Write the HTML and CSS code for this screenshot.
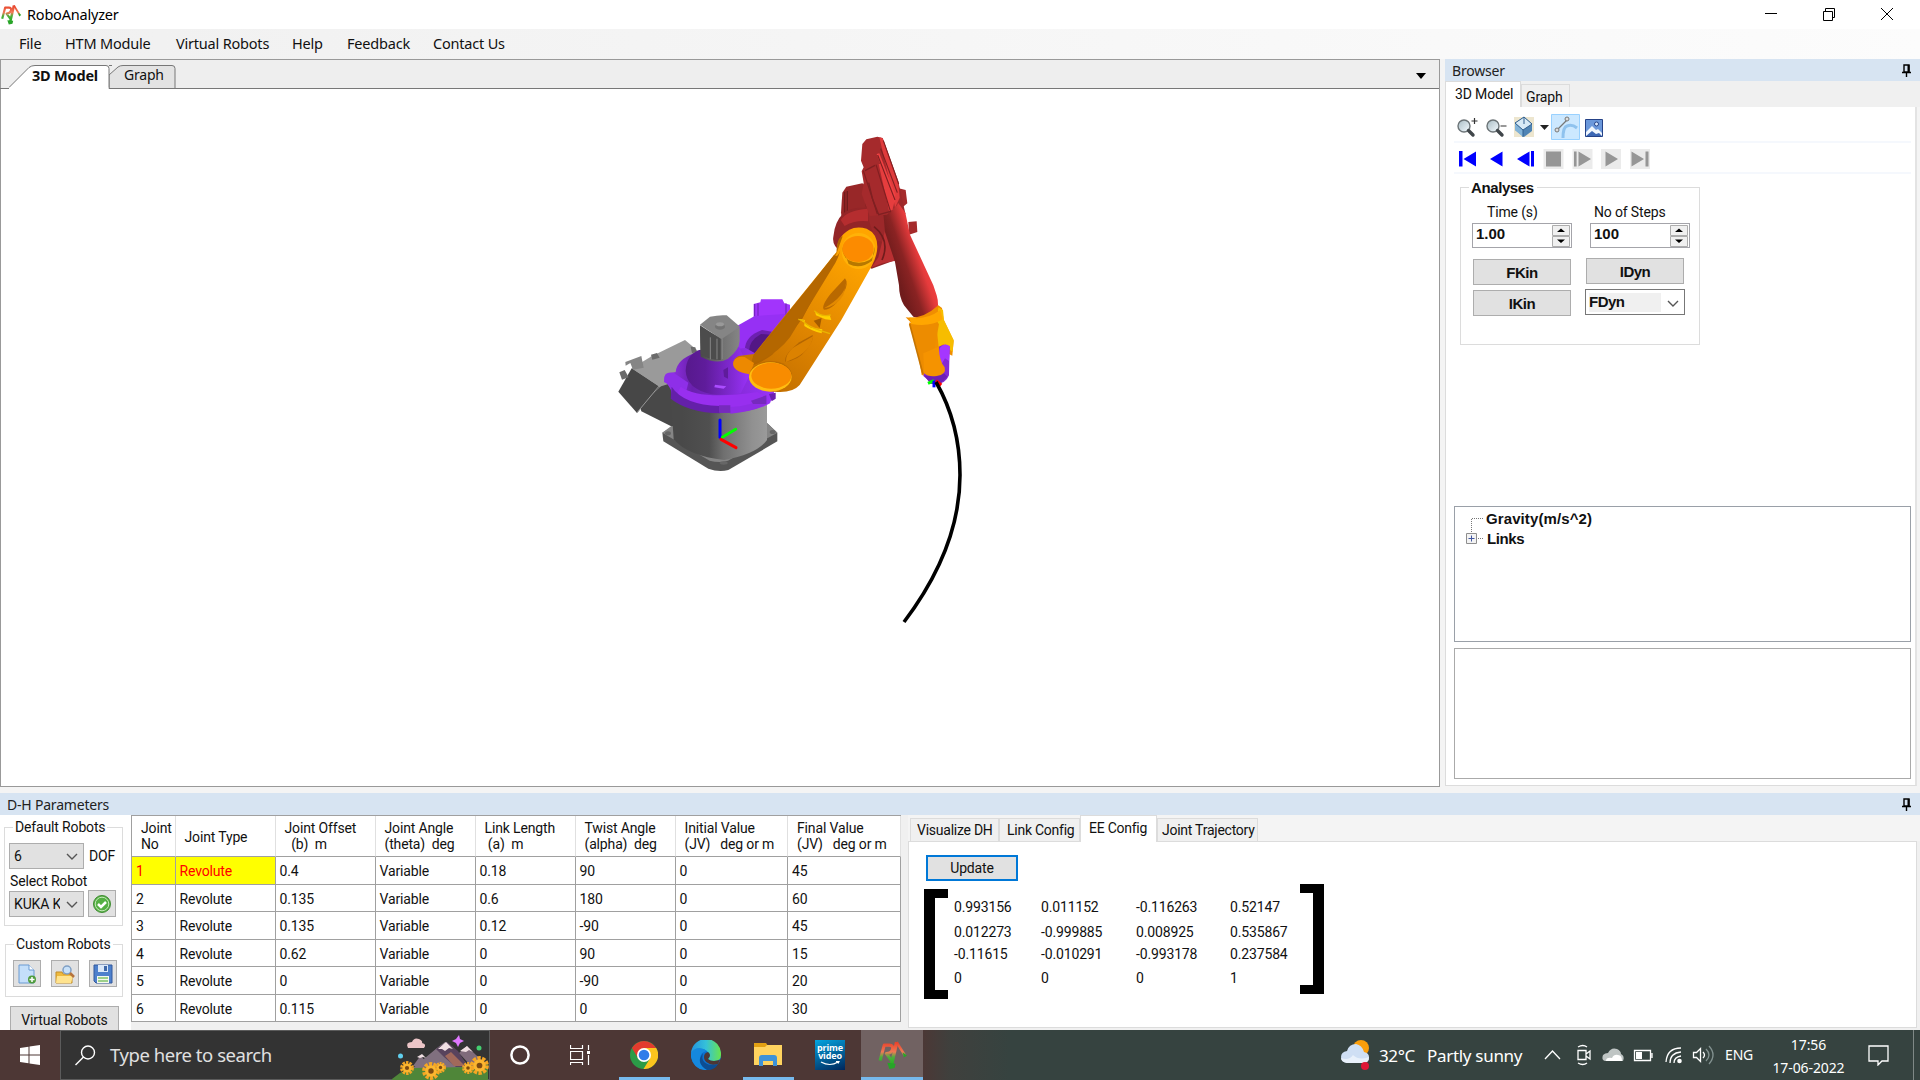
FILE: index.html
```html
<!DOCTYPE html>
<html lang="en">
<head>
<meta charset="utf-8">
<title>RoboAnalyzer</title>
<link rel="stylesheet" href="styles.css">
</head>
<body>
<svg class="defs" width="0" height="0" aria-hidden="true">
  <defs>
    <linearGradient id="ra" gradientUnits="userSpaceOnUse" x1="0" y1="2" x2="0" y2="26"><stop offset="0" stop-color="#e8402a"/><stop offset=".4" stop-color="#ef7a55"/><stop offset=".6" stop-color="#4fae3c"/><stop offset="1" stop-color="#16b516"/></linearGradient>
    <symbol id="logo" viewBox="0 0 30 30">
      <g fill="none" stroke="url(#ra)" stroke-linejoin="round">
        <path d="M3 20 7 5h5q4 0 3 4t-6 4l5 7" stroke-width="3"/>
        <path d="M19 2 14 24" stroke-width="3.4"/><path d="M19 2l8 13" stroke-width="2.4"/>
      </g>
      <path d="M25 12l4 3-3 2zM10 22l8 1-1 4-5 1z" fill="#28a428"/>
    </symbol>
    <symbol id="pin" viewBox="0 0 9 13"><path d="M2 1h5v7H2zM0 8.500h9M4.500 9v4" fill="none" stroke="#000" stroke-width="1.400"/><path d="M5.500 1h2v7h-2z"/></symbol>
    <symbol id="chev" viewBox="0 0 12 7"><path d="M1 1l5 5 5-5" fill="none" stroke="#555" stroke-width="1.400"/></symbol>
    <symbol id="flower" viewBox="-10 -10 20 20"><circle r="7.600" fill="none" stroke="#f5a623" stroke-width="4.600" stroke-dasharray="3.400 1.375"/><circle r="6.500" fill="#fbb62f"/><circle r="3" fill="#7c4a12"/></symbol>
    <linearGradient id="gLens" x1="0" y1="0" x2="1" y2="1"><stop stop-color="#a9bcc4"/><stop offset="1" stop-color="#f4fbff"/></linearGradient>
  </defs>
</svg>

<header class="titlebar">
  <svg class="app-icon" viewBox="0 0 30 30"><use href="#logo"/></svg>
  <span class="app-name">RoboAnalyzer</span>
  <svg class="win-buttons" viewBox="0 0 132 14"><g fill="none" stroke="#000"><path d="M1 6.500h12M59.500 4.500h9v9h-9zM61.500 4V1.500h9v9H69M117 1l12 12M129 1l-12 12"/></g></svg>
</header>

<nav class="menubar">
  <span class="m-file">File</span><span class="m-htm">HTM Module</span><span class="m-virt">Virtual Robots</span><span class="m-help">Help</span><span class="m-feed">Feedback</span><span class="m-cont">Contact Us</span>
</nav>

<section class="workspace">
  <main class="viewer">
    <div class="doc-tabs">
      <svg class="tab-shape" viewBox="0 0 180 29">
        <path d="M109 5.500h3M109 15L118 7q2-1.500 5-1.500h49q3 0 3 3V28.500h-66z" fill="#e3e3e3" stroke="#777"/>
        <path d="M0 28.500h8L29 7.500q2.500-2 6-2h71q3 0 3 3V29" fill="#fff" stroke="#777"/>
        <path d="M0 29h9L9 27z" fill="#eee"/>
        <path d="M0 28.500h9" stroke="#777"/>
        <path d="M9 28.500h99.500" stroke="#fff" stroke-width="2"/>
      </svg>
      <b class="tab-model">3D Model</b><span class="tab-graph">Graph</span>
      <svg class="tab-menu" viewBox="0 0 10 6"><path d="M0 0h10L5 6z"/></svg>
    </div>
    <svg class="scene" viewBox="1 89 1438 697">
      <defs>
        <linearGradient id="gBase"><stop offset=".12" stop-color="#494949"/><stop offset=".4" stop-color="#505050"/><stop offset=".55" stop-color="#707070"/><stop offset=".85" stop-color="#919191"/><stop offset="1" stop-color="#9a9a9a"/></linearGradient>
        <linearGradient id="gArm" x1="0" y1="1" x2=".6" y2="0"><stop stop-color="#b96800"/><stop offset=".45" stop-color="#dc8200"/><stop offset="1" stop-color="#ffa500"/></linearGradient>
        <linearGradient id="gTube" gradientUnits="userSpaceOnUse" x1="885" y1="450" x2="1000" y2="410"><stop stop-color="#701c1c"/><stop offset=".3" stop-color="#8a2323"/><stop offset=".65" stop-color="#e53b3c"/><stop offset="1" stop-color="#ff4546"/></linearGradient>
        <linearGradient id="gMotor"><stop stop-color="#484848"/><stop offset=".5" stop-color="#6e6e6e"/><stop offset="1" stop-color="#858585"/></linearGradient>
        <linearGradient id="gRing"><stop stop-color="#9a35f0"/><stop offset=".25" stop-color="#6a20ae"/><stop offset=".6" stop-color="#8229d4"/><stop offset="1" stop-color="#9c34fa"/></linearGradient>
        <linearGradient id="gCone"><stop stop-color="#57198d"/><stop offset=".3" stop-color="#5f1c9b"/><stop offset=".7" stop-color="#8029d1"/><stop offset="1" stop-color="#9c33fb"/></linearGradient>
      </defs>
      <g transform="translate(600 120) scale(.33333)">
        <path d="M187 938l35-22 280-6 30 28v26L385 1050q-28 8-60-4L190 964z" fill="#555"/>
        <path d="M187 938l35-26 280-2 30 28-148 84q-25 8-55 0z" fill="#858585"/>
        <g fill="#666"><ellipse cx="204" cy="940" rx="9" ry="6"/><ellipse cx="518" cy="936" rx="9" ry="6"/><ellipse cx="371" cy="1029" rx="12" ry="5"/></g>
        <path d="M120 860l80-80 60 0 0 140-48-2-88-44z" fill="#484848"/>
        <path d="M213 840h288v120q-30 42-128 60-110-12-152-62z" fill="url(#gBase)"/>
        <path d="M95 745l60-36 100-49 50 42-100 90-26 8z" fill="#9a9a9a"/>
        <path d="M55 815l40-70 84 55-68 79z" fill="#474747"/>
        <path d="M76 726l48-18 7 35-32 6-8-20-14 8z" fill="#858585"/>
        <path d="M58 757l16-7 12 22-20 7zM153 704l18-5 8 14-22 6zM272 680l14 2 4 14-14 4z" fill="#6b6b6b"/>
        <path d="M179 796l-68 82" stroke="#999" stroke-width="3"/>
        <path d="M461 552l20-5 2-9h64l6 12 17 4v70h-109z" fill="#a234fc"/><path d="M464 552v38M474 550v38M558 550v40" stroke="#6c20b3" stroke-width="3"/>
        <path d="M404 622l60-34 90-6 20 50-90 100-90 90H290z" fill="#9630f4"/>
        <path d="M436 706q-10-55 50-76l34 6-60 75z" fill="#6c20b0"/>
        <path d="M447 702q-4-38 36-60l30 2-42 60z" fill="#531785"/>
        <path d="M193 778l4-16 30-6q3-38 60-58l150-14 90 50v70l-17 46q-50 30-150 28-80-4-130-42z" fill="url(#gRing)"/>
        <path d="M193 770q6-16 28-12l44 30-6 24-17 6-7 20-18-4-7-38-18-10z" fill="#8e2fe8"/>
        <path d="M257 752q2-46 40-62l120-10 35 80-30 60q-50 8-90 2-72-16-75-70z" fill="url(#gCone)"/>
        <path d="M242 800q60 42 230 16l26 12q-50 46-150 46-90-4-120-46z" fill="#982fef"/>
        <path d="M215 800q35 54 145 58v22q-94-2-148-44z" fill="#6420a9"/>
        <path d="M391 861q65-4 108-28v20q-46 23-108 28z" fill="#8f2de5"/>
        <path d="M357 856h34v22h-34zM453 842l46-16v26h-40z" fill="#762abd"/>
        <path d="M345 794l34 5-8 7-28-4z" fill="#ab4dff"/>
        <path d="M370 750l14-8v34l-12-6z" fill="#5f1c9b"/><path d="M507 822l20-4v18l-12 8z" fill="#6c20b0"/>
        <path d="M300 622l2 88q50 26 82 6 34-26 35-52v-42l-60 30z" fill="url(#gMotor)"/>
        <path d="M300 614l30-24q28-6 50-4l40 34-56 38z" fill="#858585"/>
        <path d="M300 616l62 40v64q-36 0-60-18z" fill="#4c4c4c"/>
        <path d="M331 652v66M351 656v62M367 655v62" stroke="#858585" stroke-width="3"/>
        <ellipse cx="360" cy="620" rx="15" ry="9" fill="#737373"/><ellipse cx="360" cy="613" rx="12" ry="6" fill="#999"/>

        <path d="M727 218l12-18 48-10 20 14 14 90-20 40h-70l-8-56z" fill="#982728"/>
        <path d="M734 215v70M742 213v66M792 212l8 50" stroke="#701c1c" stroke-width="4"/>
        <path d="M700 350q4-45 30-70 20-20 76-16 54 20 76 76 12 70 5 80l-72 26-90-50q-30-18-25-46z" fill="#932527"/>
        <path d="M722 300q20-30 82-34v38q-40-4-70 14z" fill="#b52d2f"/>
        <path d="M893 204l24 6 5 40-18 15zM925 306l25-2 2 32-25 8z" fill="#a52a2b"/>
        <path d="M800 200l96-10 20 90-20 100-70-20-20-60z" fill="#9c282a"/>
        <path d="M815 442l20-30 32-130 30 60-10 80-40 8z" fill="#b93032"/>
        <path d="M822 320q50 40 24 100" fill="none" stroke="#701c1c" stroke-width="5"/>
        <path d="M850 280l38-40 28 38 14 66 70 152 10 30q6 20 3 40l-15 16q-25 16-58 8l-28-34q-15-26-15-60l-12-70-30-90z" fill="url(#gTube)"/>
        <path d="M787 72l12-14 33-8 16 4 47 130 6 50-10 22-30 28-52 4-24-66 6-34-6-34 6-12-8-20z" fill="#a52a2c"/>
        <path d="M838 52l10 3 47 134 4 44-14 30-8-44z" fill="#e03b3c"/>
        <path d="M836 132l12 0 36 110-6 26-10 8z" fill="#e63d3e"/>
        <path d="M830 102l8-2 48 124-2 24z" fill="#f04243"/>
        <path d="M790 152l42 130M828 134l44 142M842 86l50 132M833 105l52 135M850 62l46 130" stroke="#821f21" stroke-width="3.500"/>
        <path d="M795 152l30-16M806 188l12 50 18 46 36-10" fill="none" stroke="#7f2022" stroke-width="4"/>

        <path d="M917 592q50 8 98-36l11 8 5 36 30 62-4 45-36-18-8 72q-18 14-48 4l-25-150z" fill="#f08e00"/>
        <path d="M1015 562l14 8 3 30 29 60-3 36-28-24-14 10-6-60z" fill="#f7bd00"/>
        <path d="M927 608l80-10 10 15-12 64-2 82-34-8z" fill="#ed8c00"/>
        <path d="M928 592q50 10 93-22l7 28q-38 24-94 14z" fill="#ffa600"/>
        <path d="M929 612l40 150" stroke="#c77500" stroke-width="5"/>
        <path d="M1016 680q26-12 33 2l-2 84q-12 30-49 26l-28-24 5-17q38 12 50-10z" fill="#852ad3"/>
        <path d="M1019 685q14-20 31-6l-3 44-12-8-18 30-3-22z" fill="#a536ff"/>
        <path d="M972 766q26 6 60-6l10 10-20 20-30 2z" fill="#6e20b5"/>
        <path d="M970 700l46-20q2 44 18 62 6 22-24 26-24 4-38-8z" fill="#f59300"/>

        <path d="M710 395q0-44 38-66 22-11 52-3 32 14 32 54 0 28-18 60l-90 160-125 195q-22 25-75 20-55-3-72-37l-6-20-36-16q-20-20 6-34l46-6z" fill="url(#gArm)"/>
        <path d="M710 397q0-44 18-48l-18 50L607 596l-90 108q-42 30-64 32l7-30z" fill="#b26500"/>
        <path d="M702 405q12 10 18-14-2 16-14 38L570 652q-44 58-118 80 6-17 10-26l52-58z" fill="#b46700"/>
        <path d="M400 725q8-17 34-14l28 18-12 34q-57-9-50-38z" fill="#ed8900"/>
        <ellipse cx="512" cy="767" rx="64" ry="44" fill="#bc6c00"/><ellipse cx="511" cy="771" rx="64" ry="44" fill="#ffbd10"/><ellipse cx="514" cy="767" rx="60" ry="39" fill="#f88c00"/>
        <ellipse cx="776" cy="393" rx="51" ry="54" fill="#ffb208"/><path d="M727 380q0 48 50 48t47-48l-8 42q-35 28-70 10z" fill="#b77800"/><ellipse cx="774" cy="387" rx="47" ry="39" fill="#fc8b00"/>
        <path d="M735 475q12 15-3 40-28 53-60 54-10-10 20-48z" fill="#b96900"/><path d="M740 482q-2 45-68 83 40-7 58-40z" fill="#e38a00"/>
        <path d="M638 645q5 14-20 46t-62 34q-6-20 42-58z" fill="#b46600"/><path d="M640 648q-8 48-68 72l-14 6q-2-22 20-42z" fill="#dc8200"/>
        <path d="M645 574l14 10 30 2 5 14-18-2-28-12zM595 596l20 4-2 8zM613 609l20 14 34 5-2 12q-30-7-52-22z" fill="#ffd000"/>
        <path d="M643 572q20 20 49 13M595 598l18 5M612 607q20 18 78 34" fill="none" stroke="#e9b500" stroke-width="4"/>
        <path d="M641 602l24-8-6 30z" fill="#a45c00"/>

        <g fill="none" stroke-linecap="round" stroke-width="9"><path d="M360 900v52" stroke="#00f"/><path d="M367 952l40-24" stroke="#0f0"/><path d="M363 958l45 25" stroke="#f00"/></g>
        <g stroke-width="9"><path d="M984 790l18-8" stroke="#0f0"/><path d="M1002 782v20" stroke="#00f"/><path d="M1008 782l16 13" stroke="#f00"/></g>
      </g>
      <path d="M936 382Q960 424 960 475Q960 548 904 622" fill="none" stroke="#000" stroke-width="3.600"/>
    </svg>
  </main>

  <aside class="browser">
    <div class="pane-title"><span class="t-browser">Browser</span><svg class="pin"><use href="#pin"/></svg></div>
    <div class="side-tabs"><span class="side-tab on">3D Model</span><span class="side-tab">Graph</span></div>
    <div class="side-body">
      <div class="tools">
        <svg viewBox="0 0 460 28">
          <g fill="url(#gLens)" stroke="#6c7477" stroke-width="1.400"><circle cx="10" cy="13" r="6"/><circle cx="39" cy="13" r="6"/></g>
          <path d="M14.500 17.500l4.500 4.500M43.500 17.500l4.500 4.500" stroke="#40464a" stroke-width="3.400" stroke-linecap="round"/>
          <path d="M17.500 8h6M20.500 5v6M46.500 13h6" stroke="#333" stroke-width="1.200"/>
          <path d="M60 4h20v20H60z" fill="#ede6cf"/><path d="M61 10l9-6 8 7v7l-8 6-9-7z" fill="#4f84b4"/><path d="M61 10l9-6 8 7-9 6z" fill="#d7eaf6"/><path d="M61 10l8 7v7l-8-7z" fill="#82b3d8"/><path d="M61 10l9-6 8 7-9 6zM69 17v7M70 4v7" fill="none" stroke="#315f8e"/>
          <path d="M86 12h9l-4.500 5z" fill="#222"/>
          <path d="M97.500 1.500h28v25h-28z" fill="#cce8ff" stroke="#99d1ff"/>
          <path d="M109 25q0-11 4-12 5-2 10 2" fill="none" stroke="#8fc2ee" stroke-width="3"/><path d="M103 17l10-10" stroke="#777" stroke-width="1.200"/><g fill="#ddd" stroke="#777"><circle cx="103" cy="17" r="2"/><circle cx="113" cy="6" r="2"/></g>
          <path d="M131.500 6.500h17v17h-17z" fill="#6b98db" stroke="#254287"/><path d="M132 23v-4l6-6 4 4 2-1 4 4v3z" fill="#f0f6fd"/><path d="M132 23l6-5 4 3 3-1 3 3z" fill="#3c67b4"/><circle cx="142.500" cy="11" r="2" fill="#dcebff" stroke="#254287"/>
        </svg>
      </div>
      <div class="tools player">
        <svg viewBox="0 0 460 22">
          <path d="M89.500 1h20v20h-20zM118.500 1h20v20h-20zM147 1h20v20h-20zM176 1h20v20h-20z" fill="#ebebeb"/>
          <path d="M5 3h3.500v15.500H5zM22 3.500v15L9.500 11zM48.500 3.500v15L36 11zM75.500 3.500v15L63 11zM77 3h3v15.500h-3z" fill="#00f"/>
          <path d="M92 3.500h15v15H92zM120 3.500h2.600v15H120zM124.500 3.500v15L137 11zM151.500 3.500v15L164 11zM177.500 3.500v15L190 11zM191.500 3.500h3v15h-3z" fill="#969696"/>
        </svg>
      </div>
      <fieldset class="analyses">
        <legend>Analyses</legend>
        <div class="ana-grid">
          <label class="l-time">Time (s)</label><label class="l-steps">No of Steps</label>
          <div class="spin"><b>1.00</b><i><svg viewBox="0 0 18 22"><path d="M.5.500h17v10H.500zM.5 11.500h17v10H.500z" fill="#f0f0f0" stroke="#adadad"/><path d="M5 7h8L9 3.500zM5 14.500h8L9 18z"/></svg></i></div>
          <div class="spin s2"><b>100</b><i><svg viewBox="0 0 18 22"><path d="M.5.500h17v10H.500zM.5 11.500h17v10H.500z" fill="#f0f0f0" stroke="#adadad"/><path d="M5 7h8L9 3.500zM5 14.500h8L9 18z"/></svg></i></div>
          <button class="b-fk">FKin</button><button class="b-id">IDyn</button>
          <button class="b-ik">IKin</button>
          <div class="fdyn"><b>FDyn</b><svg><use href="#chev"/></svg></div>
        </div>
      </fieldset>
      <div class="tree">
        <svg class="tree-lines" viewBox="0 0 20 34"><path d="M6.500 26V6.500H18M13 26.500h5" fill="none" stroke="#777" stroke-dasharray="1 1"/><path d="M1.500 21.500h10v10h-10z" fill="#f3f3f3" stroke="#8e8e8e"/><path d="M3.500 26.500h6M6.500 23.500v6" stroke="#4156a0"/></svg>
        <div class="nodes"><b>Gravity(m/s^2)</b><b class="n-links">Links</b></div>
      </div>
      <div class="prop"></div>
    </div>
  </aside>
</section>

<div class="pane-title dh-title"><span class="t-dh">D-H Parameters</span><svg class="pin"><use href="#pin"/></svg></div>

<section class="dh">
  <div class="robots">
    <fieldset class="default"><legend>Default Robots</legend>
      <div class="row"><div class="combo"><span>6</span><svg><use href="#chev"/></svg></div><span class="dof">DOF</span></div>
      <div class="sel-label">Select Robot</div>
      <div class="row"><div class="combo kuka"><span>KUKA KR5</span><svg><use href="#chev"/></svg></div>
        <button class="icon-btn"><svg viewBox="0 0 20 20"><circle cx="10" cy="10" r="8.500" fill="#54b043" stroke="#418c34"/><circle cx="10" cy="10" r="6.800" fill="none" stroke="#c5e8ba"/><path d="M6 10l3 3 5-5" fill="none" stroke="#fff" stroke-width="2.500"/></svg></button></div>
    </fieldset>
    <fieldset class="custom"><legend>Custom Robots</legend>
      <div class="row">
        <button class="icon-btn"><svg viewBox="0 0 20 20"><path d="M2 1h10l5 5v13H2z" fill="#c4dffa" stroke="#6a9bd2"/><path d="M12 1v5h5" fill="#fff" stroke="#6a9bd2"/><circle cx="15" cy="15.500" r="4" fill="#4f9c3c"/><path d="M12.500 15.500h5M15 13v5" stroke="#fff" stroke-width="1.500"/></svg></button>
        <button class="icon-btn"><svg viewBox="0 0 20 20"><path d="M1 8h6l1 2h9v9H1z" fill="#eeb93d" stroke="#c18d28"/><path d="M2 12h16l-2 7H1z" fill="#ffe38e"/><circle cx="12" cy="6" r="4" fill="#c8e1f9" stroke="#7f9fc4" stroke-width="1.500"/><path d="M15 9l4 4" stroke="#b5733e" stroke-width="2.500"/></svg></button>
        <button class="icon-btn"><svg viewBox="0 0 20 20"><path d="M1 1h18v18H3l-2-2z" fill="#4d80cc" stroke="#33599c"/><path d="M5 1h10v7H5z" fill="#dbe8f8"/><path d="M11 2h3v5h-3z" fill="#4068a8"/><path d="M4 12h12v7H4z" fill="#f5f8ef"/><path d="M5 14h10M5 17h10" stroke="#7fc269" stroke-width="1.500"/></svg></button>
      </div>
    </fieldset>
    <button class="virtual">Virtual Robots</button>
  </div>

  <div class="table-area">
    <div class="dh-table">
      <div class="th"><span>Joint<br>No</span></div><div class="th one"><span>Joint Type</span></div><div class="th"><span>Joint Offset<br>&nbsp; (b)&nbsp; m</span></div><div class="th"><span>Joint Angle<br>(theta)&nbsp; deg</span></div><div class="th"><span>Link Length<br>&nbsp;(a)&nbsp; m</span></div><div class="th"><span>Twist Angle<br>(alpha)&nbsp; deg</span></div><div class="th"><span>Initial Value<br>(JV)&nbsp;&nbsp; deg or m</span></div><div class="th"><span>Final Value<br>(JV)&nbsp;&nbsp; deg or m</span></div>
      <div class="hl">1</div><div class="hl">Revolute</div><div>0.4</div><div>Variable</div><div>0.18</div><div>90</div><div>0</div><div>45</div>
      <div>2</div><div>Revolute</div><div>0.135</div><div>Variable</div><div>0.6</div><div>180</div><div>0</div><div>60</div>
      <div>3</div><div>Revolute</div><div>0.135</div><div>Variable</div><div>0.12</div><div>-90</div><div>0</div><div>45</div>
      <div>4</div><div>Revolute</div><div>0.62</div><div>Variable</div><div>0</div><div>90</div><div>0</div><div>15</div>
      <div>5</div><div>Revolute</div><div>0</div><div>Variable</div><div>0</div><div>-90</div><div>0</div><div>20</div>
      <div>6</div><div>Revolute</div><div>0.115</div><div>Variable</div><div>0</div><div>0</div><div>0</div><div>30</div>
    </div>
  </div>

  <div class="config">
    <div class="cfg-tabs"><span class="c1">Visualize DH</span><span class="c2">Link Config</span><span class="c3 on">EE Config</span><span class="c4">Joint Trajectory</span></div>
    <div class="cfg-body">
      <button class="update">Update</button>
      <div class="matrix">
        <div class="br left"></div>
        <div class="vals">
          <span>0.993156</span><span>0.011152</span><span>-0.116263</span><span>0.52147</span>
          <span>0.012273</span><span>-0.999885</span><span>0.008925</span><span>0.535867</span>
          <span>-0.11615</span><span>-0.010291</span><span>-0.993178</span><span>0.237584</span>
          <span>0</span><span>0</span><span>0</span><span>1</span>
        </div>
        <div class="br right"></div>
      </div>
    </div>
  </div>
</section>

<footer class="taskbar">
  <div class="slot start"><svg width="20" height="20" viewBox="0 0 20 20"><path d="M0 3l8.500-1.200v7.700H0zM9.500 1.600L20 0v9.500H9.500zM0 10.500h8.500v7.700L0 17zM9.500 10.500H20V20L9.500 18.400z" fill="#fff"/></svg></div>
  <div class="search">
    <svg class="mag" viewBox="0 0 21 21"><g fill="none" stroke="#fff" stroke-width="1.400"><circle cx="13" cy="7.500" r="6.500"/><path d="M8.500 12L.5 20"/></g></svg>
    <span>Type here to search</span>
    <svg class="scenery" viewBox="0 0 100 49">
      <path d="M3 48q14-13 35-14 20-2 34 0l27-1v16H3z" fill="#4f8639"/>
      <path d="M24 35l8-11 7 12zM24 37L48 17l8-6 8 5 16 20z" fill="#80707f"/><path d="M58 11l11 9 10 16-12 0-12-10-8-8z" fill="#58435d"/><path d="M62 21l14 14H65l-9-10z" fill="#a1695b"/><path d="M70 22l8-7 9 9 11 10-16 1z" fill="#806b7b"/>
      <path d="M49 18l8-7 7 7-4-1-4 3-3-2zM71 20l7-5 6 6-4-2-3 2zM28 26l5-3 4 4-3-1-3 1z" fill="#f0dfe2"/>
      <path d="M19 17q-3-6 4-6 2-5 7-3 4 2 3 4 5 1 2 5z" fill="#ecc5c7"/>
      <path d="M70 4l1 4 4 2-4 2-2 4-2-4-4-2 4-2z" fill="#df78ff"/><circle cx="11.500" cy="25" r="2.500" fill="#60d0ef"/><circle cx="90" cy="17" r="2.500" fill="#43cf70"/>
      <use href="#flower" x="11" y="30" width="14" height="14"/><use href="#flower" x="33" y="31" width="18" height="18"/><use href="#flower" x="46" y="31" width="11" height="11"/><use href="#flower" x="73" y="31" width="12" height="12"/><use href="#flower" x="81" y="25" width="19" height="19"/>
    </svg>
  </div>
  <div class="slot"><svg width="20" height="20" viewBox="0 0 20 20"><circle cx="10" cy="10" r="8.600" fill="none" stroke="#fff" stroke-width="2.500"/></svg></div>
  <div class="slot tasks"><svg width="20" height="20" viewBox="0 0 20 20"><g fill="none" stroke="#fff"><path d="M.5 0v3.500h12V0M.5 6.500h12v8H.500zM.5 20v-2.500h12V20M18.500 0v5M18.500 10v10" stroke-width="1.200"/></g><path d="M17 6h3v3h-3z" fill="#fff"/></svg></div>
  <div class="slot app open"><svg width="28" height="28" viewBox="0 0 28 28"><circle cx="14" cy="14" r="14" fill="#2b9b47"/><path d="M1.900 7A14 14 0 0 1 26.100 7H14L8 17z" fill="#e33b2e"/><path d="M26.200 7A14 14 0 0 1 13.500 28L20 17.500 14 7z" fill="#fcc41e"/><circle cx="14" cy="14" r="7" fill="#fff"/><circle cx="14" cy="14" r="5.300" fill="#2f7de9"/></svg></div>
  <div class="slot app"><svg width="30" height="30" viewBox="0 0 30 30"><defs><linearGradient id="e1"><stop stop-color="#2294e0"/><stop offset=".5" stop-color="#35c1d9"/><stop offset="1" stop-color="#69e44d"/></linearGradient></defs><circle cx="15" cy="15" r="15" fill="#0b71d0"/><path d="M0 13A15 15 0 0 1 30 15q0 6-7 6-5 0-6-2 3-3 0-7-7-7-17 1z" fill="url(#e1)"/><path d="M0 13q6-9 16-2-7 1-7 8 0 8 8 11Q3 31 0 17z" fill="#1588de"/><path d="M12 13q-3 10 8 12 4 0 7-1-3 6-11 6Q4 23 12 13z" fill="#0d4d92"/><path d="M17 12q4 3 0 7 2 2 6 2l6-1-2 4q-7 2-10-1-4-2-4-6 0-4 4-5z" fill="#4d3735"/></svg></div>
  <div class="slot app open"><svg width="28" height="24" viewBox="0 0 28 24"><path d="M0 0h12l2 3v5H0z" fill="#e2a013"/><path d="M0 4h11l2-2h15v20H0z" fill="#ffd35f"/><path d="M5 23V15q0-3 3-3h12q3 0 3 3v8h-4v-5H9v5z" fill="#3e92d8"/></svg></div>
  <div class="slot app"><div class="prime">prime<br>video<svg viewBox="0 0 20 5"><path d="M1 1q9 5 17 0M16 .5l3 0-1 2" fill="none" stroke="#fff" stroke-width="1.200"/></svg></div></div>
  <div class="slot app open active"><svg width="31" height="31" viewBox="0 0 30 30"><use href="#logo"/></svg></div>
  <div class="tray">
    <svg class="weather" viewBox="0 0 29 30"><circle cx="20" cy="8" r="8" fill="#fb9e0b"/><path d="M6 23q-6-1-6-6t6-6q2-7 9-7 6 1 8 8 5 1 5 5 0 6-6 6z" fill="#cfdff4"/><path d="M6 23q-6-1-6-5 8 3 12-3 6 6 16 2 0 6-6 6z" fill="#e9f1fb"/><circle cx="24" cy="26" r="4" fill="#de1737"/></svg>
    <span class="temp">32°C</span><span class="sky">Partly sunny</span>
    <svg class="icons" viewBox="0 0 170 24"><g fill="none" stroke="#fff" stroke-width="1.300">
      <path d="M1 16l7.500-8 7.500 8"/><path d="M34 7.500h8v9h-8zM42 11l4-3v8l-4-3M34 4q5-3 9 0M34 20q5 3 9 0"/>
      <path d="M90.500 7.500h16v10h-16zM108 10v5"/>
      <path d="M122 19q1-14 15-14M126 20q0-10 11-11M130 20q0-6 7-7"/><path d="M149.500 9.500h3l4-4v13l-4-4h-3zM159 9q3 3 0 6"/><path d="M162 6q6 6 0 12M165 3q8 9 0 18" stroke="#839290"/></g>
      <path d="M92 9h6v7h-6z" fill="#fff"/><circle cx="135.500" cy="18" r="2.300" fill="#fff"/><path d="M61 18q-4-1-2-6 2-2 5-2 3-6 9-4 4 2 4 5 4 2 2 7z" fill="#bfc5c4"/><path d="M62 18q0-4 6-3 2-4 6-3 4 0 4 6z" fill="#fff"/></svg>
    <span class="eng">ENG</span>
    <div class="clock"><span class="time">17:56</span><span class="date">17-06-2022</span></div>
    <svg class="note" viewBox="0 0 21 21"><path d="M1 1h19v15h-6l-4 4v-4H1z" fill="none" stroke="#fff" stroke-width="1.300"/></svg>
    <i class="show-desktop"></i>
  </div>
</footer>
</body>
</html>
```
FILE: styles.css
```css
* { box-sizing: border-box; }
body { margin: 0; width: 1920px; height: 1080px; overflow: hidden; display: flex; flex-direction: column; background: #f4f4f4; color: #111; font: 14px/16px Roboto, "Liberation Sans", sans-serif; letter-spacing: -.15px; }
span, b, label, legend, button { white-space: nowrap; }
svg { display: block; flex: none; }
.defs { position: absolute; }
button { font: inherit; color: inherit; letter-spacing: inherit; background: #e1e1e1; border: 1px solid #adadad; padding: 0; }
fieldset { margin: 0; padding: 0; border: 1px solid #dcdcdc; min-width: 0; }

.titlebar { height: 29px; flex: none; background: #fff; display: flex; align-items: center; font: 14.5px/20px "Noto Sans", sans-serif; color: #000; }
.app-icon { width: 22px; height: 22px; }
.app-name { margin-left: 5px; letter-spacing: -.2px; padding-bottom: 1px; }
.win-buttons { width: 132px; height: 14px; margin: 0 24px 1px auto; }

.menubar { height: 30px; flex: none; display: flex; align-items: center; padding: 0 0 2px 19px; background: linear-gradient(90deg, #f0f0f0, #fcfcfc); font: 14.500px/20px "Noto Sans", sans-serif; letter-spacing: -.2px; }
.m-file { width: 46px; } .m-htm { width: 111px; } .m-virt { width: 116px; } .m-help { width: 55px; } .m-feed { width: 86px; }

.workspace { height: 734px; flex: none; display: flex; gap: 5px; }
.viewer { width: 1440px; height: 728px; border: 1px solid #999; background: #fff; }
.doc-tabs { height: 29px; position: relative; background: #eee; border-bottom: 1px solid #777; display: flex; align-items: center; padding-left: 31px; font: 14px/20px "Noto Sans", sans-serif; }
.tab-shape { position: absolute; left: -1px; top: 0; width: 180px; height: 29px; }
.doc-tabs b, .doc-tabs span { position: relative; width: 92px; padding-top: 2px; letter-spacing: -.2px; }
.doc-tabs b { font-size: 14.500px; }
.tab-menu { width: 10px; height: 6px; margin: 4px 13px 0 auto; }
.scene { width: 1438px; height: 697px; }

.browser { width: 475px; }
.pane-title { height: 22px; flex: none; background: #d7e4f2; display: flex; align-items: center; justify-content: space-between; padding: 0 9px 0 7px; font: 14px/20px "Noto Sans", sans-serif; letter-spacing: -.2px; color: #222; }
.pane-title span { padding-top: 2px; }
.pin { width: 9px; height: 13px; }
.side-tabs { height: 26px; display: flex; align-items: flex-end; background: #f0f0f0; }
.side-tab { height: 23px; width: 49px; border: 1px solid #dcdcdc; border-bottom: 0; padding: 4px 0 0 4px; background: #f0f0f0; }
.side-tab.on { width: 76px; height: 26px; padding: 4px 0 0 9px; background: #fff; }
.side-body { width: 472px; height: 679px; border: 1px solid #dcdcdc; border-top: 0; border-right: 2px solid #e3e3e3; background: #fff; padding: 6px 0 0 8px; }
.tools { width: 457px; height: 30px; border-bottom: 2px solid #f5f8fd; }
.tools svg { width: 460px; height: 28px; }
.player { height: 31px; padding-top: 5px; }
.player svg { height: 22px; }
.analyses { margin: 6px 0 0 6px; width: 240px; height: 165px; }
.analyses legend, .tree b { font: bold 15px/15px "Liberation Sans", sans-serif; letter-spacing: -.4px; }
.analyses legend { margin-left: 8px; padding: 0 3px 0 2px; }
.ana-grid { display: grid; grid-template-columns: 112px 112px; grid-template-rows: 19px 36px 31px 27px; padding: 9px 0 0 11px; align-items: start; }
.l-time { padding-left: 15px; } .l-steps { padding-left: 10px; }
.spin { width: 100px; height: 25px; border: 1px solid #a4a4aa; display: flex; justify-content: space-between; padding: 1px 1px 0 3px; background: #fff; }
.spin.s2 { margin-left: 6px; }
.spin svg { width: 18px; height: 22px; }
.spin b, .ana-grid button, .fdyn b { font: bold 15px/18px "Liberation Sans", sans-serif; letter-spacing: -.5px; }
.spin b { letter-spacing: 0; }
.ana-grid button { width: 98px; height: 26px; padding-top: 2px; }
.b-fk, .b-ik { margin-left: 1px; }
.b-id { margin: -1px 0 0 2px; }
.fdyn { width: 100px; height: 26px; margin: -1px 0 0 1px; border: 1px solid #777; padding: 3px 5px 0 3px; display: flex; justify-content: space-between; }
.fdyn b { width: 72px; height: 19px; background: #f0f0f0; }
.fdyn svg, .combo svg { width: 12px; height: 7px; margin-top: 7px; }
.tree { width: 457px; height: 136px; margin-top: 161px; border: 1px solid #9aa0a8; display: flex; padding: 4px 0 0 10px; gap: 1px; }
.tree-lines { width: 20px; height: 34px; margin-top: 1px; }
.nodes { display: flex; flex-direction: column; gap: 5px; }
.tree b { letter-spacing: .1px; }
.nodes .n-links { margin-left: 1px; letter-spacing: -.4px; }
.prop { width: 457px; height: 131px; margin-top: 6px; border: 1px solid #aaa; }

.dh { height: 215px; flex: none; display: flex; background: #f0f0f0; }
.robots { width: 131px; height: 215px; background: #fff; overflow: hidden; padding: 4px 0 0 4px; flex: none; }
.robots legend { padding: 0 2px; margin-left: 8px; }
.default { width: 119px; height: 107px; }
.row { display: flex; align-items: center; }
.default .row { padding-left: 4px; gap: 5px; }
.combo { width: 75px; height: 26px; background: #e1e1e1; border: 1px solid #adadad; display: flex; justify-content: space-between; padding: 4px 5px 0 4px; margin-top: 1px; }
.combo svg { margin-top: 5px; }
.combo span { overflow: hidden; width: 46px; }
.default .row:nth-of-type(1) { margin-top: 7px; }
.sel-label { margin: 4px 0 1px 5px; }
.icon-btn { width: 28px; height: 27px; display: grid; place-items: center; }
.default .icon-btn { margin-left: -1px; }
.icon-btn svg { width: 20px; height: 20px; }
.custom { width: 118px; height: 61px; margin: 10px 0 0 1px; }
.custom .row { padding-left: 7px; gap: 10px; margin-top: 8px; }
.virtual { width: 109px; height: 28px; margin: 9px 0 0 6px; }

.table-area { width: 777px; flex: none; }
.dh-table { display: grid; grid-template-columns: 43.500px 100px 100px 100px 100px 100px 112.500px 113px; grid-template-rows: 41px repeat(6, 27.500px); width: 770px; border-left: 1px solid #a0a0a0; border-top: 1px solid #a0a0a0; }
.dh-table div { background: #fff; border-right: 1px solid #a0a0a0; border-bottom: 1px solid #a0a0a0; padding: 6px 0 0 4px; }
.dh-table .th { border-right-color: #e0e0e0; padding: 4px 0 0 9px; }
.dh-table .one { padding-top: 13px; }
.dh-table .hl { background: #ff0; color: #f00; }

.config { flex: 1; }
.cfg-tabs { height: 26px; display: flex; align-items: flex-end; padding-left: 2px; background: #f4f4f4; letter-spacing: -.25px; }
.cfg-tabs span { height: 23px; border: 1px solid #dcdcdc; border-bottom: 0; background: #f0f0f0; padding-top: 3px; }
.c1 { width: 89px; padding-left: 6px; } .c2 { width: 81px; padding-left: 7px; } .c3 { width: 77px; padding-left: 8px; } .c4 { width: 101px; padding-left: 4px; }
.cfg-body { height: 187px; width: 1009px; background: #fff; border: 1px solid #dcdcdc; padding: 13px 0 0 17px; }
.cfg-tabs .on { background: #fff; margin-bottom: -1px; height: 27px; padding-top: 4px; }
.update { display: block; width: 92px; height: 26px; border: 2px solid #0078d7; }
.matrix { display: flex; margin-top: 2px; }
.br { width: 24px; height: 110px; border: solid #000; border-width: 9px 0 9px 11px; margin: 6px 0 0 -2px; }
.br.right { border-width: 9px 11px 9px 0; margin: 1px 0 0; }
.vals { width: 352px; padding: 16px 0 0 6px; display: grid; grid-template-columns: 87px 95px 94px 70px; grid-template-rows: 24.500px 22.500px 23.500px 20px; }

.taskbar { height: 50px; flex: none; display: flex; background: linear-gradient(90deg, #4d3735 0, #4d3735 920px, #3f403d 950px, #364340 1010px); color: #fff; font-family: "Noto Sans", sans-serif; }
.slot { width: 60px; display: grid; place-items: center; flex: none; }
.tasks { width: 63px; padding-right: 3px; }
.app { width: 62px; }
.search { width: 430px; flex: none; background: #333; border: 1px solid #5b5b5b; display: flex; align-items: center; font-size: 18.500px; line-height: 26px; color: #e0e0e0; letter-spacing: -.45px; }
.mag { width: 21px; height: 21px; margin: 0 14px 0 14px; }
.scenery { width: 100px; height: 49px; margin-left: auto; }
.open { background: linear-gradient(#76b9ed, #76b9ed) center bottom / 51px 3px no-repeat; }
.active { background: linear-gradient(#76b9ed, #76b9ed) center bottom / 62px 3px no-repeat, #716262; }
.prime { width: 30px; height: 30px; background: linear-gradient(160deg, #03a5e0, #00255a); font: bold 9px/8px "Open Sans", sans-serif; text-align: center; padding-top: 4px; }
.prime svg { width: 20px; height: 5px; margin: 1px auto 0; }
.tray { flex: 1; display: flex; align-items: center; padding-left: 418px; font-size: 17px; line-height: 22px; }
.tray span { flex: none; }
.weather { width: 29px; height: 30px; }
.temp { width: 48px; margin-left: 9px; padding-top: 2px; letter-spacing: -.4px; }
.sky { width: 117px; padding-top: 2px; letter-spacing: -.3px; }
.icons { width: 170px; height: 24px; }
.eng { width: 46px; margin-left: 11px; font-size: 14px; }
.clock { width: 75px; display: flex; flex-direction: column; align-items: center; font-size: 14px; line-height: 23px; letter-spacing: -.1px; padding-top: 1px; }
.note { width: 21px; height: 21px; margin-left: 22px; }
.show-desktop { width: 1px; height: 50px; margin-left: 24px; background: #7f8886; }
```
